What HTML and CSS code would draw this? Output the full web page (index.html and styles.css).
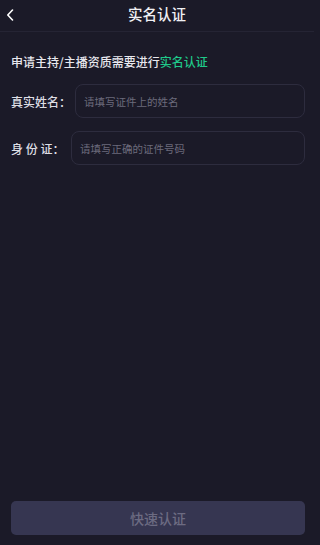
FILE: index.html
```html
<!DOCTYPE html>
<html lang="zh">
<head>
<meta charset="utf-8">
<title>实名认证</title>
<link rel="stylesheet" href="styles.css">
</head>
<body>
<div class="page">
  <header class="header">
    <span class="back">
      <svg width="8" height="12" viewBox="0 0 8 12"><path d="M6.5 1 L1.8 6 L6.5 11" fill="none" stroke="#fff" stroke-width="1.6" stroke-linecap="round" stroke-linejoin="round"/></svg>
    </span>
    <h1 class="title">实名认证</h1>
  </header>
  <main class="content">
    <p class="notice">申请主持/主播资质需要进行<span class="green">实名认证</span></p>
    <div class="row">
      <label class="label">真实姓名：</label>
      <div class="input">请填写证件上的姓名</div>
    </div>
    <div class="row">
      <label class="label spaced">身 份 证：</label>
      <div class="input">请填写正确的证件号码</div>
    </div>
  </main>
  <div class="footer">
    <button class="submit">快速认证</button>
  </div>
</div>
</body>
</html>
```

FILE: styles.css
```css
html, body {
  margin: 0;
  padding: 0;
  background: #1b1a28;
}
body {
  font-family: "Noto Sans CJK SC", "Noto Sans", sans-serif;
  color: #e6e6ec;
}
.page {
  width: 314px;
  height: 545px;
  display: flex;
  flex-direction: column;
}
.header {
  height: 31px;
  border-bottom: 1px solid #252434;
  display: flex;
  align-items: center;
  justify-content: center;
  position: relative;
}
.back {
  position: absolute;
  left: 6px;
  top: 9px;
  display: flex;
}
.title {
  margin: 0;
  font-size: 14.5px;
  font-weight: 500;
  color: #f0f0f4;
  line-height: 1;
  margin-top: -2px;
}
.content {
  flex: 1;
  padding: 0 9px 0 11px;
}
.notice {
  margin: 21px 0 0 0;
  font-size: 12px;
  line-height: 18px;
  font-weight: 500;
  color: #e8e8ee;
}
.green {
  color: #1fc98a;
}
.row {
  display: flex;
  align-items: center;
  margin-top: 13px;
}
.label {
  font-size: 12px;
  font-weight: 500;
  color: #dedee4;
  width: 64px;
  flex: none;
  white-space: nowrap;
}
.label.spaced {
  width: 60px;
}
.input {
  flex: 1;
  height: 32px;
  border: 1px solid #2d2c3e;
  border-radius: 8px;
  display: flex;
  align-items: center;
  padding-left: 8px;
  font-size: 10.5px;
  color: #6c6b7c;
}
.footer {
  padding: 0 9px 10px 11px;
}
.submit {
  width: 100%;
  height: 34px;
  border: none;
  border-radius: 5px;
  background: #363651;
  color: #6c6b82;
  font-family: "Noto Sans CJK SC", "Noto Sans", sans-serif;
  font-size: 14px;
  font-weight: 500;
}
```
